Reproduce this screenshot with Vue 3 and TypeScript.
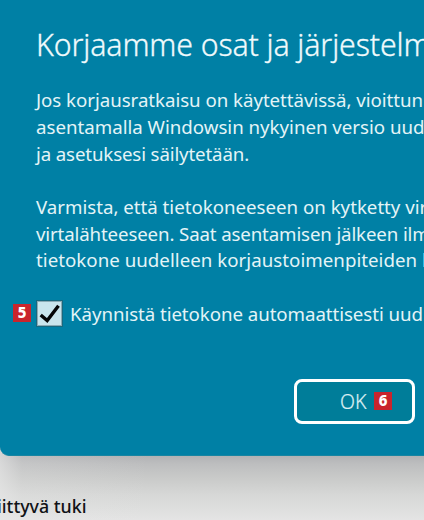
<script setup lang="ts">
interface Line { text: string; tone: string }

const paragraphs: Line[][] = [
  [
    { text: 'Jos korjausratkaisu on käytettävissä, vioittun', tone: 'slight' },
    { text: 'asentamalla Windowsin nykyinen versio uud', tone: 'even' },
    { text: 'ja asetuksesi säilytetään.', tone: 'tight' },
  ],
  [
    { text: 'Varmista, että tietokoneeseen on kytketty vir', tone: 'even' },
    { text: 'virtalähteeseen. Saat asentamisen jälkeen ilm', tone: 'tight' },
    { text: 'tietokone uudelleen korjaustoimenpiteiden k', tone: 'loose' },
  ],
]
</script>

<template>
  <div class="screen">
    <section class="dialog">
      <h1>Korjaamme osat ja järjestelm</h1>
      <p v-for="(lines, i) in paragraphs" :key="i">
        <span v-for="line in lines" :key="line.text" class="line" :class="line.tone">{{ line.text }}</span>
      </p>
      <div class="option">
        <span class="badge">5</span>
        <span class="checkbox">
          <svg viewBox="0 0 27 27" width="27" height="27">
            <path d="M4.7 15 L11.2 20.6 L22.5 5.8" fill="none" stroke="#050608" stroke-width="3.4" />
          </svg>
        </span>
        <span class="label">Käynnistä tietokone automaattisesti uud</span>
      </div>
      <button class="ok"><span class="ok-text">OK</span><span class="badge">6</span></button>
    </section>
    <footer>iittyvä tuki</footer>
  </div>
</template>

<style>
body { margin: 0; overflow: hidden; }
</style>

<style scoped>
.screen {
  width: 424px;
  height: 520px;
  overflow: hidden;
  background:
    linear-gradient(90deg, rgba(232, 232, 232, 0.65), rgba(232, 232, 232, 0.2) 22px, rgba(232, 232, 232, 0) 150px),
    linear-gradient(#b0b1b3 455px, #bdbebf 464px, #c9cac9 478px, #d6d7d6 494px, #e4e4e4 520px);
  font-family: "Noto Sans", sans-serif;
}
.dialog {
  box-sizing: border-box;
  display: flex;
  flex-direction: column;
  height: 456px;
  padding: 25px 0 0 36px;
  overflow: hidden;
  border-bottom: 1px solid #1785a2;
  border-bottom-left-radius: 9px;
  background: #0080a5;
  color: #e4f4f7;
  white-space: nowrap;
}
h1 {
  margin: 0 0 22px;
  font-size: 30.3px;
  line-height: 40px;
  font-weight: 300;
  letter-spacing: -0.13px;
  color: #f0fafc;
  -webkit-text-stroke: 0.3px #f0fafc;
}
p {
  margin: 0 0 26.5px;
  font-size: 18.7px;
  line-height: 26.8px;
}
.line { display: block; white-space: pre; }
.even { letter-spacing: -0.01px; }
.loose { letter-spacing: 0.03px; }
.slight { letter-spacing: -0.04px; }
.tight { letter-spacing: -0.14px; }
.option {
  display: flex;
  align-items: center;
  height: 28px;
  margin: -1px 0 0 -23px;
}
.badge {
  flex: none;
  width: 18px;
  height: 18px;
  background: #c9252d;
  color: #fff;
  font-size: 15px;
  line-height: 17px;
  font-weight: 800;
  text-align: center;
}
.option .badge { margin-bottom: 2px; }
.checkbox {
  box-sizing: border-box;
  display: flex;
  flex: none;
  align-items: center;
  justify-content: center;
  width: 27px;
  height: 27px;
  margin: 0 7px 1px 5px;
  border: 1px solid #176980;
  background: #c9e5ed;
  box-shadow: inset 0 0 0 1px #8babb5;
}
.checkbox svg { flex: none; }
.label { font-size: 18.7px; line-height: 28px; letter-spacing: -0.06px; }
.ok {
  box-sizing: border-box;
  display: flex;
  align-items: center;
  width: 121px;
  height: 45px;
  margin: 51px 0 0 258px;
  padding: 0 0 0 43px;
  border: 3px solid #fff;
  border-radius: 8px;
  background: #007d99;
  color: #dceff3;
  font-family: inherit;
}
.ok-text {
  flex: none;
  width: 34px;
  padding-top: 2px;
  font-size: 19.5px;
  line-height: 26px;
  font-weight: 300;
  text-align: left;
  -webkit-text-stroke: 0.2px #dceff3;
}
footer {
  margin: 36px 0 0 -3px;
  color: #101216;
  font-size: 17.8px;
  line-height: 28px;
  font-weight: 500;
  white-space: nowrap;
}
</style>
